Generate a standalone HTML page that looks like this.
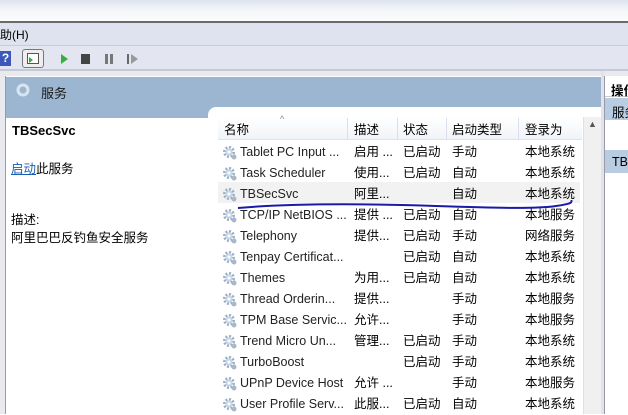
<!DOCTYPE html>
<html><head><meta charset="utf-8"><style>
*{margin:0;padding:0;box-sizing:border-box}
body{width:628px;height:414px;overflow:hidden;position:relative;background:#fff;font-family:"Liberation Sans","Noto Sans CJK SC",sans-serif;font-size:12px;color:#000}
.a{position:absolute;white-space:nowrap}
.row{position:absolute;left:218px;width:362px;height:21px}
.row span{position:absolute;top:3px;line-height:15px;font-size:12.5px}
.g{position:absolute;left:4px;top:3px;width:16px;height:16px}
</style></head><body>
<div class="a" style="left:0;top:0;width:628px;height:22px;background:linear-gradient(180deg,#dde4ee 0,#f4f6fa 45%,#fbfcfd 100%)"></div>
<div class="a" style="left:0;top:21px;width:628px;height:2px;background:#6a6a6a"></div>
<div class="a" style="left:0;top:23px;width:628px;height:22px;background:#dfe3f0"></div>
<div class="a" style="left:0;top:26px;font-size:12px">助(H)</div>
<div class="a" style="left:0;top:45px;width:628px;height:1px;background:#c7ccdb"></div>
<div class="a" style="left:0;top:46px;width:628px;height:24px;background:#e3e6f1"></div>
<div class="a" style="left:0;top:51px;width:11px;height:15px;background:#3d58b8;color:#fff;font-weight:bold;font-size:12px;text-align:center;line-height:15px">?</div>
<div class="a" style="left:22px;top:49px;width:22px;height:19px;border:1px solid #777;border-radius:3px;background:#eee"><div style="position:absolute;left:4px;top:3px;width:12px;height:11px;border:1px solid #555;background:#fff"></div><div style="position:absolute;left:6px;top:7px;width:0;height:0;border-left:4px solid #3a3;border-top:3px solid transparent;border-bottom:3px solid transparent"></div></div>
<div class="a" style="left:61px;top:54px;width:0;height:0;border-left:7px solid #3aae3a;border-top:5px solid transparent;border-bottom:5px solid transparent"></div>
<div class="a" style="left:81px;top:54px;width:9px;height:10px;background:#444"></div>
<div class="a" style="left:105px;top:54px;width:3px;height:10px;background:#777"></div>
<div class="a" style="left:110px;top:54px;width:3px;height:10px;background:#777"></div>
<div class="a" style="left:127px;top:54px;width:2px;height:10px;background:#666"></div>
<div class="a" style="left:131px;top:54px;width:0;height:0;border-left:7px solid #999;border-top:5px solid transparent;border-bottom:5px solid transparent"></div>
<div class="a" style="left:0;top:69px;width:628px;height:2px;background:#c4c9d6"></div>
<div class="a" style="left:0;top:71px;width:628px;height:343px;background:#e8eaf0"></div>
<div class="a" style="left:5px;top:76px;width:596px;height:338px;background:#fff;border-left:1px solid #99a"></div>
<div class="a" style="left:6px;top:77px;width:595px;height:41px;background:#9cb6d1"></div>
<svg class="a" style="left:15px;top:82px" width="16" height="16" viewBox="0 0 16 16"><circle cx="8" cy="8" r="5" fill="none" stroke="#d8e4f0" stroke-width="3"/><circle cx="8" cy="8" r="2" fill="#9cb6d1"/></svg>
<div class="a" style="left:41px;top:83px;font-size:13px;color:#1a1a1a">服务</div>
<div class="a" style="left:208px;top:107px;width:393px;height:307px;background:#fff;border-top-left-radius:8px"></div>
<div class="a" style="left:12px;top:123px;font-weight:bold;font-size:13px">TBSecSvc</div>
<div class="a" style="left:11px;top:158px;font-size:12.5px"><span style="color:#1a5fb4;text-decoration:underline">启动</span>此服务</div>
<div class="a" style="left:11px;top:209px;font-size:12.5px">描述:</div>
<div class="a" style="left:11px;top:227px;font-size:12.5px">阿里巴巴反钓鱼安全服务</div>
<div class="a" style="left:218px;top:117px;width:364px;height:23px;background:linear-gradient(#fff,#f0f4f8);border-bottom:1px solid #dde3ea"></div>
<div class="a" style="left:224px;top:119px;font-size:12.5px">名称</div>
<div class="a" style="left:280px;top:114px;font-size:9px;color:#888">^</div>
<div class="a" style="left:347px;top:118px;width:1px;height:22px;background:#dde"></div>
<div class="a" style="left:354px;top:119px;font-size:12.5px">描述</div>
<div class="a" style="left:397px;top:118px;width:1px;height:22px;background:#dde"></div>
<div class="a" style="left:403px;top:119px;font-size:12.5px">状态</div>
<div class="a" style="left:446px;top:118px;width:1px;height:22px;background:#dde"></div>
<div class="a" style="left:452px;top:119px;font-size:12.5px">启动类型</div>
<div class="a" style="left:518px;top:118px;width:1px;height:22px;background:#dde"></div>
<div class="a" style="left:525px;top:119px;font-size:12.5px">登录为</div>
<div class="a" style="left:583px;top:117px;width:18px;height:297px;background:#f0f0f0;border-left:1px solid #e0e0e0"></div>
<div class="a" style="left:588px;top:119px;font-size:9px;color:#555">▲</div>
<div class="a" style="left:218px;top:182px;width:362px;height:21px;background:#f2f2f2"></div>
<svg width="0" height="0" style="position:absolute"><defs><g id="gear"><circle cx="7" cy="7" r="4.5" fill="none" stroke="#9ab0c8" stroke-width="3" stroke-dasharray="2 1.5"/><circle cx="7" cy="7" r="3.5" fill="#c8d6e4"/><circle cx="7" cy="7" r="1.5" fill="#fff"/><circle cx="12" cy="12" r="2.5" fill="#a8b8c8"/></g></defs></svg>
<div id="rows"></div>
<script>
var d=[["Tablet PC Input ...","启用 ...","已启动","手动","本地系统"],["Task Scheduler","使用...","已启动","自动","本地系统"],["TBSecSvc","阿里...","","自动","本地系统"],["TCP/IP NetBIOS ...","提供 ...","已启动","自动","本地服务"],["Telephony","提供...","已启动","手动","网络服务"],["Tenpay Certificat...","","已启动","自动","本地系统"],["Themes","为用...","已启动","自动","本地系统"],["Thread Orderin...","提供...","","手动","本地服务"],["TPM Base Servic...","允许...","","手动","本地服务"],["Trend Micro Un...","管理...","已启动","手动","本地系统"],["TurboBoost","","已启动","手动","本地系统"],["UPnP Device Host","允许 ...","","手动","本地服务"],["User Profile Serv...","此服...","已启动","自动","本地系统"]];
var h="";d.forEach(function(r,i){h+='<div class="row" style="top:'+(142+i*21)+'px"><svg class="g" viewBox="0 0 16 16"><use href="#gear"/></svg><span style="left:22px;color:#222">'+r[0]+'</span><span style="left:136px">'+r[1]+'</span><span style="left:185px">'+r[2]+'</span><span style="left:234px">'+r[3]+'</span><span style="left:307px">'+r[4]+'</span></div>';});
document.getElementById("rows").innerHTML=h;
</script>
<svg class="a" style="left:236px;top:200px" width="340" height="14"><path d="M2 8 C60 3,140 4,200 6 S300 9,320 6 S334 2,336 0" fill="none" stroke="#1a1aa8" stroke-width="2"/></svg>
<div class="a" style="left:601px;top:71px;width:3px;height:343px;background:#e0e3ea"></div>
<div class="a" style="left:604px;top:76px;width:24px;height:338px;background:#fff;border-left:1px solid #99a"></div>
<div class="a" style="left:605px;top:77px;width:23px;height:20px;background:#fff;border-bottom:1px solid #ccc"></div>
<div class="a" style="left:611px;top:80px;font-weight:bold;font-size:12.5px">操作</div>
<div class="a" style="left:605px;top:98px;width:23px;height:22px;background:#b9cde2"></div>
<div class="a" style="left:612px;top:102px;font-size:12.5px">服务</div>
<div class="a" style="left:605px;top:150px;width:23px;height:23px;background:#b9cde2"></div>
<div class="a" style="left:612px;top:155px;font-size:12.5px">TB</div>
</body></html>
